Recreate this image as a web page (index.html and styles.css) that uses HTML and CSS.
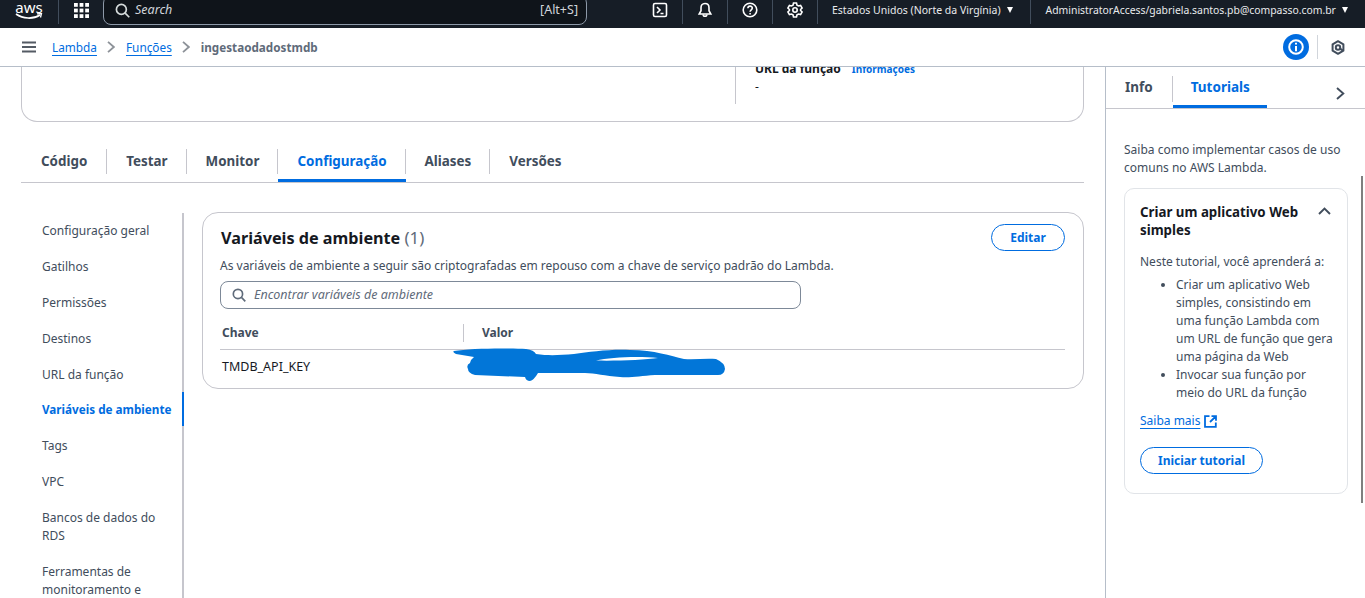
FILE: index.html
```html
<!DOCTYPE html>
<html lang="pt-BR">
<head>
    <meta charset="UTF-8">
    <meta name="viewport" content="width=device-width, initial-scale=1.0">
    <title>Lambda - ingestaodadostmdb</title>
    <link rel="stylesheet" href="styles.css">
</head>
<body>
    <header class="topnav">
        <div class="logo">
            <span class="logo-text">aws</span>
            <svg class="logo-smile" width="28" height="7" viewBox="0 0 28 7"><path d="M1 1c7 5 17 5.500 24 1" fill="none" stroke="#fff" stroke-width="1.600"/><path d="M22 .8l4.500-.3-1 4" fill="none" stroke="#fff" stroke-width="1.300"/></svg>
        </div>
        <span class="nav-sep sep-logo"></span>
        <svg class="grid-icon" width="15" height="15" viewBox="0 0 15 15" fill="#fff"><rect width="3.800" height="3.800"/><rect x="5.600" width="3.800" height="3.800"/><rect x="11.200" width="3.800" height="3.800"/><rect y="5.600" width="3.800" height="3.800"/><rect x="5.600" y="5.600" width="3.800" height="3.800"/><rect x="11.200" y="5.600" width="3.800" height="3.800"/><rect y="11.200" width="3.800" height="3.800"/><rect x="5.600" y="11.200" width="3.800" height="3.800"/><rect x="11.200" y="11.200" width="3.800" height="3.800"/></svg>
        <div class="nav-search">
            <svg width="15" height="15" viewBox="0 0 16 16" fill="none" stroke="#d5dbdb" stroke-width="1.800"><circle cx="6.800" cy="6.800" r="5.300"/><path d="M10.800 10.800l4.400 4.400"/></svg>
            <span class="nav-search-text">Search</span>
            <span class="nav-search-key">[Alt+S]</span>
        </div>
        <div class="nav-right">
            <svg class="nav-icon" width="16" height="16" viewBox="0 0 16 16" fill="none" stroke="#fff" stroke-width="1.600"><rect x="1.500" y="1.500" width="13" height="13" rx="1.500"/><path d="M5 5l3 3-3 3M8.500 11.500h3"/></svg>
            <span class="nav-sep"></span>
            <svg class="nav-icon" width="16" height="16" viewBox="0 0 16 16" fill="none" stroke="#fff" stroke-width="1.600"><path d="M8 1.500c-2.800 0-4 2-4 4.200v3L2.200 12h11.600L12 8.700v-3c0-2.200-1.200-4.200-4-4.200z"/><path d="M6.200 12.500c0 2.400 3.600 2.400 3.600 0"/></svg>
            <span class="nav-sep"></span>
            <svg class="nav-icon" width="16" height="16" viewBox="0 0 16 16" fill="none" stroke="#fff" stroke-width="1.600"><circle cx="8" cy="8" r="6.800"/><path d="M5.900 6.200c0-2.800 4.400-2.800 4.400-.1 0 1.800-2.200 1.700-2.200 3.700"/><path d="M8.100 11v1.500"/></svg>
            <span class="nav-sep"></span>
            <svg class="nav-icon" width="16" height="16" viewBox="0 0 16 16" fill="none" stroke="#fff" stroke-width="1.600"><path d="M6.500 1h3l.5 2.100 1.600.9 2-.6 1.500 2.600-1.500 1.500v1l1.500 1.500-1.500 2.600-2-.6-1.600.9-.5 2.100h-3L6 12.900l-1.600-.9-2 .6-1.500-2.600 1.500-1.500v-1L.9 6l1.500-2.600 2 .6L6 3.100z"/><circle cx="8" cy="8" r="2.200"/></svg>
            <span class="nav-sep"></span>
            <span class="nav-menu nav-region">Estados Unidos (Norte da Virgínia)<i class="caret"></i></span>
            <span class="nav-sep"></span>
            <span class="nav-menu nav-account">AdministratorAccess/gabriela.santos.pb@compasso.com.br<i class="caret"></i></span>
        </div>
    </header>

    <div class="crumbbar">
        <svg class="burger" width="14" height="12" viewBox="0 0 14 12" fill="none" stroke="#545b64" stroke-width="2"><path d="M0 1.500h14M0 6h14M0 10.500h14"/></svg>
        <a class="crumb-link">Lambda</a>
        <svg class="crumb-arrow" width="8" height="12" viewBox="0 0 8 12" fill="none" stroke="#8d9299" stroke-width="1.800"><path d="M1 .8L6.800 6 1 11.200"/></svg>
        <a class="crumb-link">Funções</a>
        <svg class="crumb-arrow" width="8" height="12" viewBox="0 0 8 12" fill="none" stroke="#8d9299" stroke-width="1.800"><path d="M1 .8L6.800 6 1 11.200"/></svg>
        <span class="crumb-current">ingestaodadostmdb</span>
        <div class="crumb-tools">
            <span class="info-circle">
                <svg width="16" height="16" viewBox="0 0 16 16" fill="none" stroke="#fff" stroke-width="2"><circle cx="8" cy="8" r="6.800"/><path d="M8 3.800v1.800M8 7v5.200"/></svg>
            </span>
            <span class="tools-sep"></span>
            <svg width="14" height="15" viewBox="0 0 14 15" fill="none" stroke="#414d5c" stroke-width="2" stroke-linejoin="round"><path d="M7 1.200l5.400 3.100v6.400L7 13.800l-5.400-3.100V4.300z"/><circle cx="7" cy="7.500" r="2.200"/><path d="M9 8.700l3 2"/></svg>
        </div>
    </div>

    <div class="workspace">
        <main class="content">
            <section class="overview-card">
                <div class="overview-cell">
                    <div class="overview-label"><strong>URL da função</strong><a class="info-link">Informações</a></div>
                    <div class="overview-value">-</div>
                </div>
            </section>

            <nav class="tabs">
                <a class="tab tab-first">Código</a>
                <a class="tab">Testar</a>
                <a class="tab">Monitor</a>
                <a class="tab tab-active">Configuração</a>
                <a class="tab">Aliases</a>
                <a class="tab tab-last">Versões</a>
            </nav>

            <div class="config">
                <ul class="sidemenu">
                    <li>Configuração geral</li>
                    <li>Gatilhos</li>
                    <li>Permissões</li>
                    <li>Destinos</li>
                    <li>URL da função</li>
                    <li class="side-active">Variáveis de ambiente</li>
                    <li>Tags</li>
                    <li>VPC</li>
                    <li>Bancos de dados do RDS</li>
                    <li>Ferramentas de monitoramento e operações</li>
                </ul>

                <section class="env-card">
                    <div class="env-head">
                        <div>
                            <h2 class="env-title">Variáveis de ambiente <span class="env-count">(1)</span></h2>
                            <p class="env-desc">As variáveis de ambiente a seguir são criptografadas em repouso com a chave de serviço padrão do Lambda.</p>
                        </div>
                        <button class="btn btn-edit">Editar</button>
                    </div>
                    <div class="env-search">
                        <svg width="14" height="14" viewBox="0 0 16 16" fill="none" stroke="#5f6b7a" stroke-width="1.900"><circle cx="6.800" cy="6.800" r="5.300"/><path d="M10.800 10.800l4.400 4.400"/></svg>
                        <span>Encontrar variáveis de ambiente</span>
                    </div>
                    <div class="env-table">
                        <div class="env-row env-row-head">
                            <div class="env-key">Chave</div>
                            <div class="env-val"><span>Valor</span></div>
                        </div>
                        <div class="env-row">
                            <div class="env-key env-key-name">TMDB_API_KEY</div>
                            <div class="env-val"></div>
                        </div>
                        <!-- value hidden by a hand drawn blue scribble -->
                        <svg class="scribble" width="280" height="40" viewBox="0 0 280 40"><path fill-rule="evenodd" fill="#0276d8" d="M4 6C20 3 60 3 76 4Q84 5 86 9C100 11 110 10 124 9C140 7 160 4 180 5C205 5 220 11 234 14C245 15 255 13 266 14Q275 18 275 24Q274 30 268 30L205 30C190 31 180 33 170 32C155 31 145 28 135 28L88 28Q84 35 80 36Q76 36 75 32L25 30Q18 28 18 24Q16 20 20 18Q21 14 24 12L6 9Q2 7 4 6ZM146 15.500C160 12 190 11 208 13C195 15 165 16 146 15.500Z"/></svg>
                    </div>
                </section>
            </div>
        </main>

        <aside class="panel">
            <div class="panel-tabs">
                <a class="panel-tab">Info</a>
                <a class="panel-tab panel-tab-active">Tutorials</a>
                <svg class="panel-close" width="9" height="13" viewBox="0 0 9 13" fill="none" stroke="#414d5c" stroke-width="1.900"><path d="M1 1l6.300 5.500L1 12"/></svg>
            </div>
            <div class="panel-body">
                <p class="panel-intro">Saiba como implementar casos de uso comuns no AWS Lambda.</p>
                <section class="tutorial">
                    <div class="tutorial-head">
                        <h3>Criar um aplicativo Web simples</h3>
                        <svg width="13" height="8" viewBox="0 0 13 8" fill="none" stroke="#414d5c" stroke-width="1.900"><path d="M1 7l5.500-5.500L12 7"/></svg>
                    </div>
                    <p class="tutorial-lead">Neste tutorial, você aprenderá a:</p>
                    <ul class="tutorial-list">
                        <li>Criar um aplicativo Web simples, consistindo em uma função Lambda com um URL de função que gera uma página da Web</li>
                        <li>Invocar sua função por meio do URL da função</li>
                    </ul>
                    <div class="tutorial-more">
                        <a class="more-link">Saiba mais</a>
                        <svg width="13" height="13" viewBox="0 0 13 13" fill="none" stroke="#006ce0" stroke-width="1.800"><path d="M5.500 1.200H1v10.600h10.800V7.500M7.500 1.200h4.500v4.500M12 1.200L6 7"/></svg>
                    </div>
                    <button class="btn btn-wide">Iniciar tutorial</button>
                </section>
            </div>
            <span class="panel-scrollbar"></span>
        </aside>
    </div>
</body>
</html>
```

FILE: styles.css
```css
* {
    box-sizing: border-box;
}

html, body {
    height: 100%;
}

body {
    margin: 0;
    height: 598px;
    overflow: hidden;
    background: #fff;
    color: #16191f;
    font-family: "Noto Sans", Arial, sans-serif;
    font-size: 12px;
    line-height: 18px;
    display: flex;
    flex-direction: column;
}

ul, p, h2, h3 {
    margin: 0;
    padding: 0;
}

/* top bar */
.topnav {
    height: 28px;
    flex: none;
    display: flex;
    align-items: flex-start;
    background: #161d26;
    overflow: hidden;
    color: #fff;
    padding-left: 15px;
}

.logo {
    width: 28px;
    height: 24px;
    flex: none;
}

.logo-text {
    display: block;
    font-size: 15px;
    line-height: 15px;
    text-align: center;
}

.logo-smile {
    display: block;
    margin-top: -2px;
}

.nav-sep {
    width: 1px;
    height: 24px;
    flex: none;
    background: #414d5c;
}

.sep-logo {
    margin-left: 15px;
    margin-right: 15px;
}

.grid-icon {
    flex: none;
    margin-top: 3px;
}

.nav-search {
    width: 484px;
    height: 30px;
    margin-top: -5px;
    margin-left: 14px;
    flex: none;
    display: flex;
    align-items: center;
    padding: 0 8px 0 11px;
    background: #0f141a;
    border: 1px solid #8d99a8;
    border-radius: 8px;
    color: #d1d5db;
    font-size: 12.5px;
}

.nav-search-text {
    margin-left: 5px;
    font-style: italic;
}

.nav-search-key {
    margin-left: auto;
}

.nav-right {
    margin-left: 51px;
    display: flex;
    align-items: flex-start;
}

.nav-icon {
    margin: 2px 14px 0;
    flex: none;
}

.nav-menu {
    padding: 1px 16px 0 14px;
    font-size: 10.5px;
    line-height: 18px;
    white-space: nowrap;
    color: #e9ebed;
}

.nav-region {
    padding-right: 17px;
}

.nav-account {
    padding-left: 15px;
    font-size: 10.4px;
}

.caret {
    display: inline-block;
    margin-left: 6px;
    border-left: 3.500px solid transparent;
    border-right: 3.500px solid transparent;
    border-top: 6px solid #fff;
    vertical-align: 1px;
}

/* breadcrumb bar */
.crumbbar {
    height: 39px;
    flex: none;
    display: flex;
    align-items: center;
    padding: 0 20px 0 22px;
    border-bottom: 1px solid #b6bec9;
    background: #fff;
    font-size: 11.8px;
}

.burger {
    margin-right: 16px;
}

.crumb-link {
    color: #006ce0;
    text-decoration: underline;
    text-underline-offset: 3px;
}

.crumb-arrow {
    margin: 0 10.500px;
}

.crumb-current {
    font-size: 11.7px;
    font-weight: 700;
    color: #5f6b7a;
}

.crumb-tools {
    margin-left: auto;
    display: flex;
    align-items: center;
}

.info-circle {
    width: 26px;
    height: 26px;
    border-radius: 50%;
    background: #006ce0;
    display: flex;
    align-items: center;
    justify-content: center;
}

.tools-sep {
    width: 1px;
    height: 24px;
    margin: 0 13px 0 8px;
    background: #d1d5db;
}

/* main area */
.workspace {
    flex: 1;
    min-height: 0;
    display: flex;
}

.content {
    width: 1105px;
    flex: none;
    padding: 0 21px;
    overflow: hidden;
}

.overview-card {
    height: 55px;
    display: flex;
    justify-content: flex-end;
    border: 1px solid #c6c6cd;
    border-top: 0;
    border-radius: 0 0 16px 16px;
}

.overview-cell {
    width: 348px;
    height: 37px;
    padding-left: 19px;
    border-left: 1px solid #c6c6cd;
    overflow: hidden;
}

.overview-label {
    margin-top: -7px;
    display: flex;
    align-items: baseline;
    gap: 11px;
}

.info-link {
    color: #006ce0;
    font-size: 10px;
    font-weight: 700;
}

/* tabs */
.tabs {
    height: 60px;
    margin-top: 1px;
    display: flex;
    align-items: flex-end;
    border-bottom: 1px solid #c6c6cd;
}

.tab {
    height: 33px;
    padding: 0 19px 10px;
    display: flex;
    align-items: center;
    font-size: 13.4px;
    font-weight: 700;
    color: #414d5c;
    position: relative;
}

.tab-first {
    padding: 0 20px 10px;
}

.tab::after {
    content: "";
    position: absolute;
    right: 0;
    top: 0;
    height: 25px;
    width: 1px;
    background: #c6c6cd;
}

.tab-last::after {
    display: none;
}

.tab-active {
    color: #006ce0;
    border-bottom: 3px solid #006ce0;
    padding-bottom: 7px;
}

/* config area */
.config {
    margin-top: 29px;
    display: flex;
    align-items: flex-start;
}

.sidemenu {
    width: 163px;
    flex: none;
    list-style: none;
    margin-top: 1px;
    padding: 9px 0 0 21px;
    border-right: 2px solid #c6c6cd;
    height: 400px;
    color: #414d5c;
}

.sidemenu li {
    margin-bottom: 18px;
    padding-right: 8px;
}

.sidemenu .side-active {
    color: #006ce0;
    font-size: 11.7px;
    font-weight: 700;
    margin-right: -2px;
    padding: 8px 0;
    margin-top: -10px;
    margin-bottom: 11px;
    border-right: 2px solid #006ce0;
}

.env-card {
    margin-left: 18px;
    flex: 1;
    height: 177px;
    padding: 13px 18px 0 17px;
    border: 1px solid #c6c6cd;
    border-radius: 16px;
}

.env-head {
    display: flex;
    justify-content: space-between;
    align-items: flex-start;
}

.env-title {
    margin-left: 1px;
    font-size: 16.2px;
    line-height: 24px;
    font-weight: 700;
    color: #16191f;
}

.env-count {
    font-size: 17px;
    font-weight: 400;
    color: #5f6b7a;
}

.env-desc {
    margin-top: 7px;
    color: #414d5c;
}

.btn {
    height: 27px;
    padding: 0;
    font: 700 12px/18px "Noto Sans", Arial, sans-serif;
    color: #006ce0;
    background: #fff;
    border: 1px solid #006ce0;
    border-radius: 14px;
    flex: none;
}

.btn-edit {
    width: 74px;
    margin-top: -2px;
}

.env-search {
    width: 581px;
    height: 28px;
    margin-top: 6px;
    display: flex;
    align-items: center;
    gap: 8px;
    padding-left: 11px;
    border: 1px solid #7d8998;
    border-radius: 8px;
    font-size: 12.5px;
    font-style: italic;
    color: #5f6b7a;
}

.env-table {
    margin-top: 15px;
    position: relative;
}

.env-row {
    display: flex;
    height: 35px;
    align-items: center;
    padding-bottom: 2px;
}

.env-row-head {
    height: 26px;
    padding-bottom: 7px;
    border-bottom: 1px solid #c6c6cd;
    font-weight: 700;
    color: #414d5c;
}

.env-key {
    width: 243px;
    padding-left: 2px;
    flex: none;
}

.env-key-name {
    font-size: 12.5px;
}

.env-val {
    flex: 1;
    padding-left: 18px;
}

.env-row-head .env-val {
    border-left: 1px solid #c6c6cd;
}

.scribble {
    position: absolute;
    left: 230px;
    top: 21px;
}

/* right panel */
.panel {
    flex: 1;
    border-left: 1px solid #b6bec9;
    position: relative;
    overflow: hidden;
}

.panel-tabs {
    height: 42px;
    display: flex;
    align-items: flex-end;
    border-bottom: 1px solid #c6c6cd;
}

.panel-tab {
    height: 32px;
    padding: 0 19px 9px;
    display: flex;
    align-items: center;
    font-size: 13.5px;
    font-weight: 700;
    color: #414d5c;
}

.panel-tab:first-child {
    border-right: 1px solid #c6c6cd;
    height: 26px;
    margin-bottom: 6px;
    padding-bottom: 5px;
}

.panel-tab-active {
    color: #006ce0;
    border-bottom: 3px solid #006ce0;
    padding: 0 17px 8px 18px;
}

.panel-close {
    margin-left: auto;
    margin-right: 20px;
    margin-bottom: 8px;
}

.panel-body {
    padding: 32px 17px 0 18px;
}

.panel-intro {
    color: #414d5c;
}

.tutorial {
    margin-top: 11px;
    height: 306px;
    padding: 14px 15px 0;
    border: 1px solid #e1e4e8;
    border-radius: 10px;
}

.tutorial-head {
    display: flex;
    justify-content: space-between;
    align-items: flex-start;
}

.tutorial-head h3 {
    width: 165px;
    font-size: 13.3px;
    line-height: 18px;
    font-weight: 700;
}

.tutorial-head svg {
    margin: 4px 1px 0 0;
}

.tutorial-lead {
    margin-top: 14px;
    color: #414d5c;
}

.tutorial-list {
    margin: 5px -4px 0 0;
    padding-left: 36px;
    color: #414d5c;
}

.tutorial-more {
    margin-top: 10px;
    display: flex;
    align-items: center;
    gap: 4px;
}

.more-link {
    color: #006ce0;
    text-decoration: underline;
    text-underline-offset: 3px;
}

.btn-wide {
    width: 123px;
    margin-top: 17px;
}

.panel-scrollbar {
    position: absolute;
    right: 2px;
    top: 109px;
    width: 2px;
    height: 327px;
    background: #7f7f7f;
}
```
